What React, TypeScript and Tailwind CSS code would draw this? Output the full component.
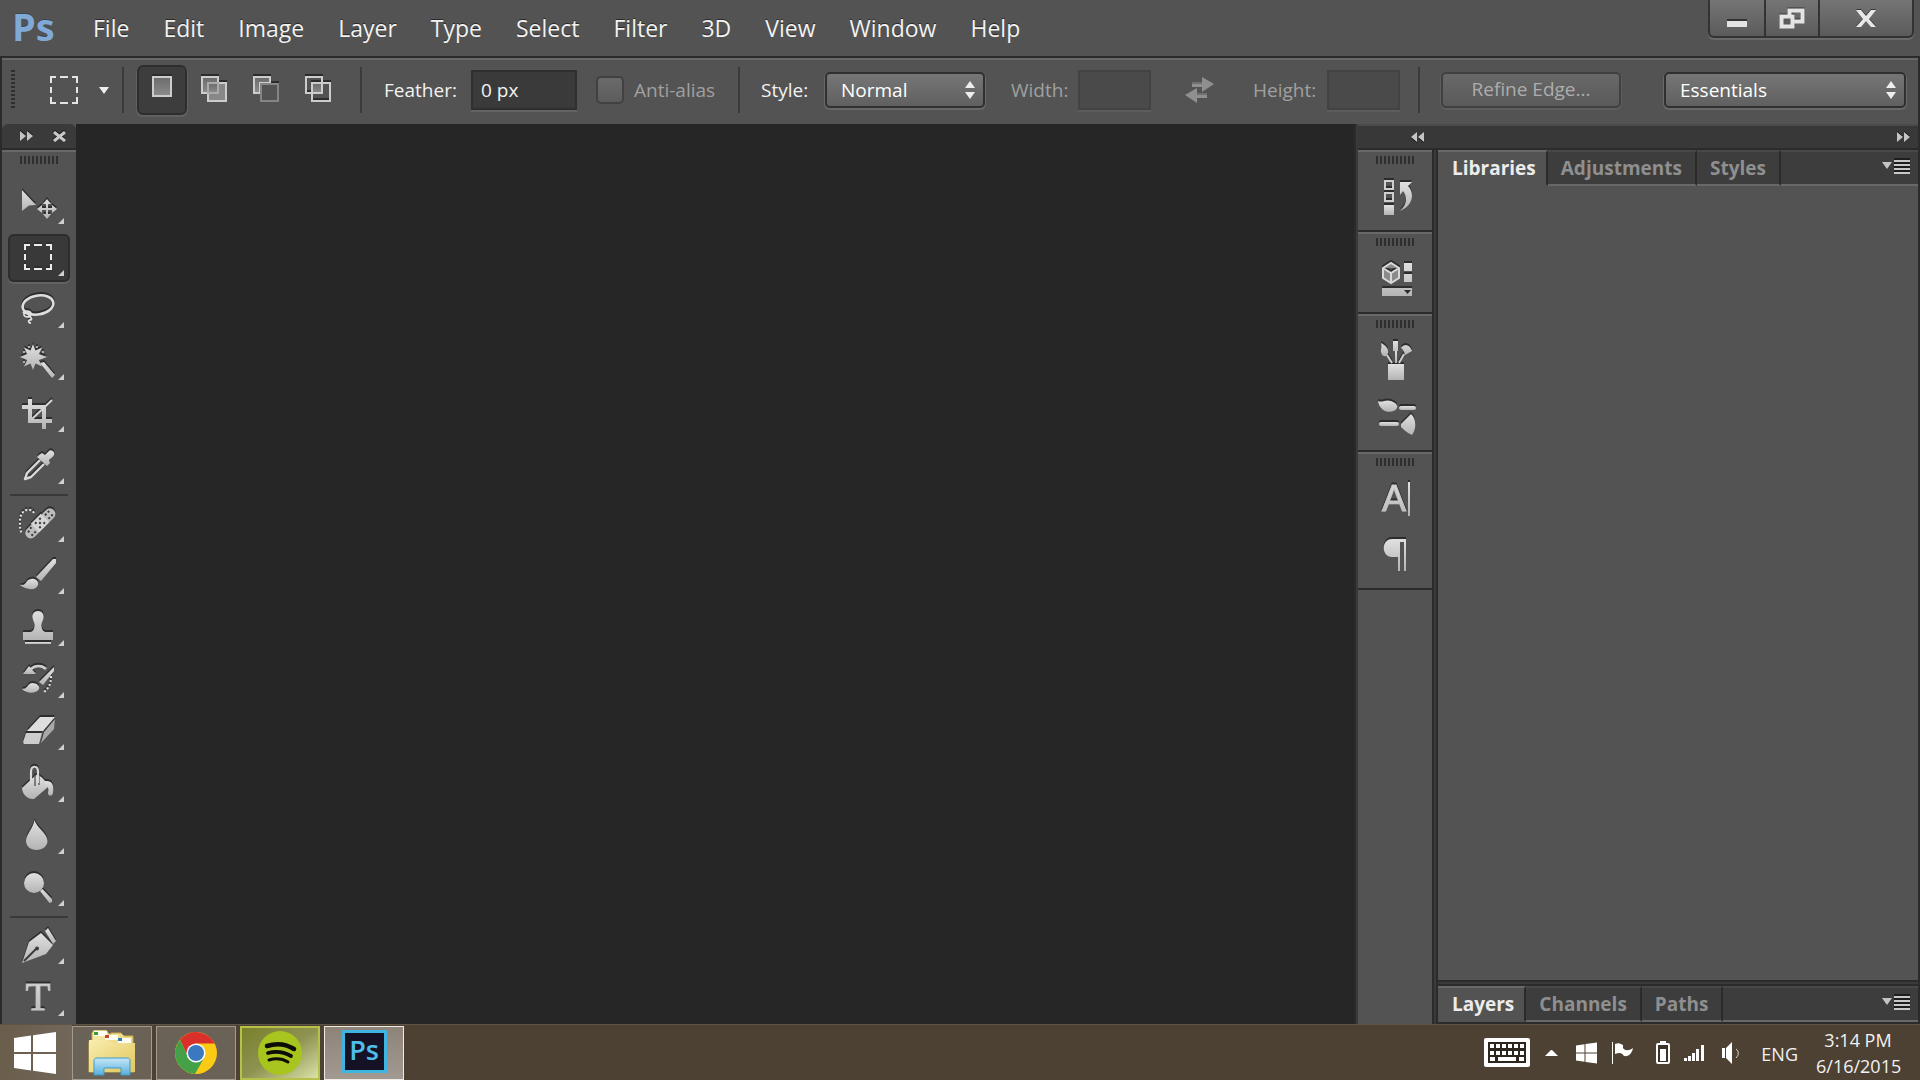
import type { ReactNode } from "react";

const menus = [
  "File",
  "Edit",
  "Image",
  "Layer",
  "Type",
  "Select",
  "Filter",
  "3D",
  "View",
  "Window",
  "Help",
];

interface Tool {
  name: string;
  icon: ReactNode;
  endsGroup?: boolean;
}

const SHADE = "url(#shade)";

const tools: Tool[] = [
  {
    name: "Move",
    icon: (
      <>
        <path d="M20 10 34 25 27 25.500 20 31Z" />
        <path d="M45 19l4 5h-3v4h4v-3l5 4-5 4v-3h-4v4h3l-4 5-4-5h3v-4h-4v3l-5-4 5-4v3h4v-4h-3z" />
      </>
    ),
  },
  {
    name: "Rectangular marquee",
    icon: (
      <path
        d="M23 18v-5h5M32 13h8M44 13h5v5M49 22v6M49 32v5h-5M40 37h-8M28 37h-5v-5M23 28v-6"
        fill="none"
        stroke="#ececec"
        strokeWidth="2"
      />
    ),
  },
  {
    name: "Lasso",
    icon: (
      <g fill="none" stroke="#dedede" strokeWidth="2.500">
        <ellipse cx="36" cy="21" rx="15.500" ry="9.500" transform="rotate(-10 36 21)" />
        <path
          d="M21 29c2-3 8-2 8 1s-6 4-7 1 4-2 6 1 2 4 0 4 -2 3 1 3"
          strokeWidth="1.800"
        />
      </g>
    ),
  },
  {
    name: "Magic wand",
    icon: (
      <>
        <path d="M31 8l2.500 6.500 6.500-3-3 6.500 8 3-8 3 3 6.500-6.500-3L31 34l-2.500-6.500-6.500 3 3-6.500-7-3 7-3-3-6.500 6.500 3z" />
        <path d="M38 27l4-1 11 13-3 3z" />
        <g fill="#cfcfcf">
          <circle cx="27" cy="11" r="1" />
          <circle cx="35" cy="11" r="1" />
          <circle cx="22" cy="16" r="1" />
          <circle cx="22" cy="26" r="1" />
          <circle cx="41" cy="16" r="1" />
        </g>
      </>
    ),
  },
  {
    name: "Crop",
    icon: (
      <>
        <path d="M26 11h4v6h14v14h6v4h-6v6h-4v-6H26V21h-6v-4h6zM30 21v10h10V21z" fillRule="evenodd" />
        <path d="M30 31 50 12" stroke="#d4d4d4" strokeWidth="2" />
      </>
    ),
  },
  {
    name: "Eyedropper",
    icon: (
      <>
        <path
          d="M38 20 25 33l-2 6 6-2 13-13"
          fill="none"
          stroke="#d8d8d8"
          strokeWidth="2.400"
          strokeLinejoin="round"
        />
        <path d="M37 15l3-2 3 2 4-4c2-2 7 1 4.500 5L47 20l1 3-3 3-10-9z" />
      </>
    ),
    endsGroup: true,
  },
  {
    name: "Spot healing brush",
    icon: (
      <>
        <path
          d="M32 15c-3-6-14-4-14 8v4c0 5 1 6 2 9"
          fill="none"
          stroke="#e4e4e4"
          strokeWidth="2"
          strokeDasharray="2 2"
        />
        <g transform="rotate(-45 38 25)">
          <rect x="19" y="20" width="38" height="11" rx="5.500" fill="#bdbdbd" />
          <rect x="31" y="19" width="14" height="12" fill="#d6d6d6" />
          <path
            d="M23 23h2M27 28h2M27 22h2M23 28h2M34 22h2M40 22h2M37 25h2M34 28h2M40 28h2M47 23h2M51 23h2M47 28h2M51 28h2"
            stroke="#3a3a3a"
            strokeWidth="2"
          />
        </g>
      </>
    ),
  },
  {
    name: "Brush",
    icon: (
      <>
        <path d="M54 9v4L39 31l-5-4L51 9z" />
        <path d="M18 35c7 1 5-5 11-6 5-1 8 3 7 6-2 6-12 5-18 0z" />
      </>
    ),
  },
  {
    name: "Clone stamp",
    icon: (
      <>
        <path d="M36 9c4 0 6 3 5.500 6.500-.5 4-2.500 5-2 9 .5 3 2 5.500 4 5.500H51v8H21v-8h7.500c2 0 3.500-2.500 4-5.500.5-4-1.500-5-2-9C30 12 32 9 36 9z" />
        <path d="M23 40h26v2H23z" />
      </>
    ),
  },
  {
    name: "History brush",
    icon: (
      <>
        <path d="M27 12l7 8H21z" />
        <path d="M29 15c4-4 11-4 15 0" fill="none" stroke="#d0d0d0" strokeWidth="2.500" />
        <path d="M52 13v4L41 31l-4-3z" />
        <path d="M20 35c6 0 5-5 10-6 5 0 8 3 7 6-3 5-12 5-17 0z" />
        <path
          d="M49 22c0 8-2 12-7 16"
          fill="none"
          stroke="#e0e0e0"
          strokeWidth="2"
          strokeDasharray="2 2"
        />
      </>
    ),
  },
  {
    name: "Eraser",
    icon: (
      <>
        <path d="M38 11h15L41 25H25z" fill="#dedede" />
        <path d="M24 27h16l-3 11H22c-1-1-1-3 0-5z" fill="#cdcdcd" />
        <path d="M42 26l11-13-1 10-13 14z" fill="#a8a8a8" />
      </>
    ),
  },
  {
    name: "Paint bucket",
    icon: (
      <>
        <path d="M20 30 34 17c5 0 10 6 12 12L32 41c-6 1-12-5-12-11z" />
        <path d="M43 23c8-1 9 5 8 12-1 4-5 3-5 0 1-5 0-7-4-8z" />
        <path d="M33 17v11M37 17v10" stroke="#444" strokeWidth="1.200" />
        <path
          d="M29 25V14c0-7 7-7 7 0v11"
          fill="none"
          stroke="#d8d8d8"
          strokeWidth="2.200"
        />
      </>
    ),
  },
  {
    name: "Blur",
    icon: <path d="M32.500 10c2 8 13 13 13 21 0 5-5 9-11 9s-10.500-4-10.500-9c0-7 7-12 8.500-21z" />,
  },
  {
    name: "Dodge",
    icon: (
      <>
        <circle cx="32" cy="21" r="10" />
        <path d="M38 29l2.500-2L50 37v3l-2.500 1z" />
      </>
    ),
    endsGroup: true,
  },
  {
    name: "Pen",
    icon: (
      <>
        <path d="M20 43l7-21 12-9 12 12-7 9z" />
        <path d="M43 11l3-3L54 21l-3 3z" />
        <path d="M22 41l12-12" stroke="#3c3c3c" strokeWidth="2" />
        <circle cx="35" cy="28.500" r="2" fill="#3c3c3c" />
      </>
    ),
  },
  {
    name: "Type",
    icon: (
      <text
        x="36"
        y="38"
        textAnchor="middle"
        fontFamily="Liberation Serif, serif"
        fontSize="41"
        stroke="#c8c8c8"
      >
        T
      </text>
    ),
  },
];

function ShadeDefs() {
  return (
    <svg width="0" height="0" className="absolute" aria-hidden="true">
      <defs>
        <linearGradient id="shade" x1="0" y1="0" x2="0" y2="1">
          <stop offset="0" stopColor="#e0e0e0" />
          <stop offset="1" stopColor="#b4b4b4" />
        </linearGradient>
        <linearGradient id="well" x1="0" y1="0" x2="0" y2="1">
          <stop offset="0" stopColor="#6a6a6a" />
          <stop offset="1" stopColor="#8c8c8c" />
        </linearGradient>
        <linearGradient id="folder" x1="0" y1="0" x2="1" y2="1">
          <stop offset="0" stopColor="#f8eeb0" />
          <stop offset="1" stopColor="#e3c65c" />
        </linearGradient>
        <linearGradient id="stand" x1="0" y1="0" x2="0" y2="1">
          <stop offset="0" stopColor="#c5e7f7" />
          <stop offset="1" stopColor="#58b0dd" />
        </linearGradient>
      </defs>
    </svg>
  );
}

function Grip() {
  return (
    <div className="h-2 w-[38px] bg-[repeating-linear-gradient(90deg,#2f2f2f_0_2px,#535353_2px_4px)]" />
  );
}

function Divider() {
  return <div className="h-[46px] w-[2px] shrink-0 bg-[#3b3b3b]" />;
}

function MenuBar() {
  return (
    <header className="flex h-14 shrink-0 bg-[#535353]">
      <div className="w-[76px] pl-3 text-[38px] leading-[52px] font-bold text-[#80a9d6] [text-shadow:0_-1px_0_#3a4652]">
        Ps
      </div>
      <nav className="flex">
        {menus.map((menu) => (
          <button
            key={menu}
            className="px-[17px] text-[23px] leading-[54px] [text-shadow:0_-1px_0_#2a2a2a]"
          >
            {menu}
          </button>
        ))}
      </nav>
      <div className="mr-[6px] ml-auto flex h-[38px] divide-x-2 divide-[#333] rounded-b-md border-2 border-t-0 border-[#333] bg-linear-to-b from-[#757575] to-[#5b5b5b] shadow-[0_2px_0_#6a6a6a]">
        <button aria-label="Minimize" className="flex w-14 justify-center pt-5">
          <svg width="22" height="8" fill="#e4e4e4" className="drop-shadow-[0_-2px_0_#333]">
            <path d="M1 1h20v6H1z" />
          </svg>
        </button>
        <button aria-label="Restore" className="flex w-[54px] justify-center pt-2">
          <svg width="26" height="22" className="drop-shadow-[0_-1px_0_#333]">
            <path d="M10.500 2.500h13v11h-13z" fill="none" stroke="#e4e4e4" strokeWidth="4" />
            <path d="M2.500 8.500h11v10h-11z" fill="#5c5c5c" stroke="#e4e4e4" strokeWidth="4" />
          </svg>
        </button>
        <button aria-label="Close" className="flex w-[92px] justify-center pt-[9px]">
          <svg width="22" height="20" className="drop-shadow-[0_-1px_0_#333]">
            <path d="M1 1h5l5 6 5-6h5l-7 9 7 8h-5l-5-6-5 6H1l7-8z" fill="#e8e8e8" />
          </svg>
        </button>
      </div>
    </header>
  );
}

function SelectBox({ id, options, width }: { id: string; options: string[]; width: string }) {
  return (
    <div className={`relative ${width}`}>
      <select
        id={id}
        aria-label={id}
        className="h-9 w-full appearance-none rounded-[5px] border-2 border-[#303030] bg-linear-to-b from-[#767676] to-[#606060] px-[14px] text-[19px] leading-8 text-white shadow-[0_1px_0_1px_#686868]"
      >
        {options.map((option) => (
          <option key={option}>{option}</option>
        ))}
      </select>
      <svg
        width="12"
        height="18"
        fill="#eee"
        className="pointer-events-none absolute top-[9px] right-[9px]"
      >
        <path d="M6 0l5 7H1zM1 11h10l-5 7z" />
      </svg>
    </div>
  );
}

const selectionModes = [
  {
    name: "New selection",
    icon: <path d="M4 1h18v19H4z" fill="url(#well)" stroke="#ccc" strokeWidth="2" />,
  },
  {
    name: "Add to selection",
    icon: (
      <g strokeWidth="2" stroke="#ccc" fill="url(#well)">
        <path d="M1 1h16v16H1z" />
        <path d="M7 7h18v18H7z" fill="#888" />
        <path d="M7 7h10v10H7z" stroke="#aaa" />
      </g>
    ),
  },
  {
    name: "Subtract from selection",
    icon: (
      <g strokeWidth="2" fill="url(#well)">
        <path d="M1 1h16v6H7v10H1z" stroke="#ccc" />
        <path d="M8 8h17v17H8z" stroke="#858585" fill="#535353" />
      </g>
    ),
  },
  {
    name: "Intersect with selection",
    icon: (
      <g strokeWidth="2" stroke="#ccc" fill="none">
        <path d="M1 1h16v16H1z" />
        <path d="M7 7h18v18H7z" />
        <path d="M7 7h10v10H7z" fill="url(#well)" />
      </g>
    ),
  },
];

function OptionsBar() {
  return (
    <div className="flex h-[68px] shrink-0 items-center border-t-2 border-r-2 border-l-2 border-[#2b2b2b] bg-[#535353] pb-[2px] text-[19px] shadow-[inset_0_2px_0_#686868]">
      <div className="ml-[9px] h-10 w-1 shrink-0 bg-[repeating-linear-gradient(#2f2f2f_0_2px,#535353_2px_4px)]" />
      <button aria-label="Tool preset" className="ml-[35px] flex items-center gap-5">
        <svg width="28" height="28" fill="none" stroke="#e4e4e4" strokeWidth="2">
          <path d="M1 7V1h5M10 1h8M22 1h5v6M27 11v6M27 21v6h-5M18 27h-8M6 27H1v-6M1 17v-6" />
        </svg>
        <svg width="12" height="8" fill="#eee">
          <path d="M1 1h10L6 8z" />
        </svg>
      </button>
      <div className="ml-3">
        <Divider />
      </div>
      <div className="ml-[13px] flex gap-[2px]">
        {selectionModes.map((mode, index) => (
          <button
            key={mode.name}
            aria-label={mode.name}
            className={`flex h-[50px] w-[50px] justify-center rounded-md border-2 pt-[9px] ${
              index === 0
                ? "border-[#2e2e2e] bg-[#3d3d3d] shadow-[0_1px_0_1px_#616161]"
                : "border-transparent"
            }`}
          >
            <svg width="26" height="27" className="drop-shadow-[0_-2px_0_#2c2c2c]">
              {mode.icon}
            </svg>
          </button>
        ))}
      </div>
      <div className="ml-[17px]">
        <Divider />
      </div>
      <label htmlFor="feather" className="ml-[22px] w-[87px]">
        Feather:
      </label>
      <input
        id="feather"
        defaultValue="0 px"
        className="h-10 w-[106px] border-2 border-[#2f2f2f] bg-[#3a3a3a] pl-2 shadow-[0_2px_0_#636363] outline-none"
      />
      <label className="ml-[19px] flex w-[142px] items-center gap-[10px] text-[#a0a0a0]">
        <input
          type="checkbox"
          disabled
          className="h-7 w-7 appearance-none rounded-[5px] border-2 border-[#414141] bg-linear-to-b from-[#6a6a6a] to-[#5c5c5c]"
        />
        Anti-alias
      </label>
      <Divider />
      <label htmlFor="Style" className="ml-[21px] w-16">
        Style:
      </label>
      <SelectBox id="Style" options={["Normal", "Fixed Ratio", "Fixed Size"]} width="w-[160px]" />
      <label htmlFor="width" className="ml-[26px] w-[67px] text-[#a0a0a0]">
        Width:
      </label>
      <input
        id="width"
        disabled
        className="h-10 w-[73px] border-2 border-[#434343] bg-[#4a4a4a] shadow-[0_2px_0_#5c5c5c]"
      />
      <button aria-label="Swap width and height" className="ml-[34px]" disabled>
        <svg width="30" height="28" fill="#8f8f8f">
          <path d="M7 6h10V1l12 7-12 8v-5H7zM22 22H12v5L0 19l12-7v5h10z" />
          <path d="M7 6h10v2H7zM12 17h10v2H12z" fill="#707070" />
        </svg>
      </button>
      <label htmlFor="height" className="ml-[38px] w-[74px] text-[#a0a0a0]">
        Height:
      </label>
      <input
        id="height"
        disabled
        className="mr-[18px] h-10 w-[73px] border-2 border-[#434343] bg-[#4a4a4a] shadow-[0_2px_0_#5c5c5c]"
      />
      <Divider />
      <button
        disabled
        className="ml-[21px] h-9 w-[180px] rounded-[5px] border-2 border-[#404040] bg-linear-to-b from-[#686868] to-[#5a5a5a] pb-[2px] leading-[28px] text-[#adadad] shadow-[0_1px_0_1px_#5e5e5e]"
      >
        Refine Edge...
      </button>
      <div className="mr-3 ml-auto">
        <SelectBox
          id="Workspace"
          options={["Essentials", "Photography", "Painting"]}
          width="w-[242px]"
        />
      </div>
    </div>
  );
}

function Chevrons({ flip = false }: { flip?: boolean }) {
  return (
    <svg
      width="13"
      height="10"
      fill="#c4c4c4"
      className={`drop-shadow-[0_-1px_0_#111] ${flip ? "rotate-180" : ""}`}
    >
      <path d="M0 0l6 5-6 5zM7 0l6 5-6 5z" />
    </svg>
  );
}

function Toolbox() {
  return (
    <aside className="w-[76px] shrink-0 border-l-2 border-[#2b2b2b] bg-[#535353]">
      <div className="flex h-[26px] items-center justify-between rounded-t-md border-b-2 border-[#2b2b2b] bg-[#3a3a3a] pr-[10px] pl-[18px]">
        <button aria-label="Expand toolbox">
          <Chevrons />
        </button>
        <button aria-label="Close toolbox">
          <svg width="13" height="11" className="drop-shadow-[0_-1px_0_#111]">
            <path d="M1 1l11 9M12 1L1 10" stroke="#c8c8c8" strokeWidth="3" />
          </svg>
        </button>
      </div>
      <div className="h-[30px] border-t-2 border-[#686868] pt-1 pl-[18px]">
        <Grip />
      </div>
      {tools.map((tool) => (
        <div key={tool.name}>
          <div className="px-[6px] py-[2px]">
            <button
              aria-label={tool.name}
              className={`block h-12 w-[62px] rounded-md ${
                tool.name === "Rectangular marquee"
                  ? "bg-[#393939] shadow-[inset_0_0_0_2px_#2d2d2d,0_2px_0_#626262]"
                  : ""
              }`}
            >
              <svg width="62" height="48" viewBox="6 2 62 48">
                <g fill={SHADE} className="drop-shadow-[0_-2px_0_#2e2e2e]">
                  {tool.icon}
                </g>
                <path d="M62 38v6h-6z" fill="#d0d0d0" />
              </svg>
            </button>
          </div>
          {tool.endsGroup && <hr className="mx-2 my-[2px] border-t-2 border-[#393939]" />}
        </div>
      ))}
    </aside>
  );
}

const panelGroups: { name: string; icon: ReactNode }[][] = [
  [
    {
      name: "History",
      icon: (
        <>
          <path
            d="M10 6h8v8h-8zM10 18h8v8h-8z"
            fill="none"
            stroke="#cfcfcf"
            strokeWidth="2"
          />
          <path d="M9 30h10v10H9z" />
          <path d="M25 7h12l-4 4c7 7 5 20-8 25 8-7 7-15 3-20l-3 4z" />
        </>
      ),
    },
  ],
  [
    {
      name: "Properties",
      icon: (
        <>
          <path
            d="M8 11l8-5 8 5v10l-8 5-8-5zM8 11l8 5 8-5M16 16v10"
            fill="#8a8a8a"
            stroke="#d8d8d8"
            strokeWidth="2"
          />
          <path d="M29 6h8v8h-8zM29 17h8v8h-8zM7 31h30v8H7z" />
          <path d="M29 33h7l-3.500 4z" fill="#2c2c2c" />
        </>
      ),
    },
  ],
  [
    {
      name: "Brush",
      icon: (
        <>
          <path d="M13 25h16v16H13z" />
          <path d="M6 4c4 2 8 5 7 10-1 5-6 4-7-1-.5-3 1-5 0-9zM18 2h5v10h-5zM26 9c3-5 9-4 11 3l-7 4c-1-4-2-6-4-7z" />
          <path d="M12 16l5 8M29 15l-5 9" stroke="#cfcfcf" strokeWidth="2" />
          <path d="M20 12h2v12h-2z" />
        </>
      ),
    },
    {
      name: "Brush presets",
      icon: (
        <>
          <path d="M3 6c5 2 7-2 13 0 5 2 7 4 6 7-3 6-17 6-19-7z" />
          <rect x="24" y="11" width="17" height="4" rx="2" />
          <rect x="4" y="27" width="20" height="4" rx="2" />
          <path d="M26 29l10-10c5 4 6 14 1 21-5-2-9-6-11-8z" />
        </>
      ),
    },
  ],
  [
    {
      name: "Character",
      icon: (
        <>
          <text
            x="19"
            y="34"
            textAnchor="middle"
            fontFamily="Liberation Sans, sans-serif"
            fontSize="36"
            stroke="#c8c8c8"
          >
            A
          </text>
          <path d="M33 5h2v34h-2z" />
        </>
      ),
    },
    {
      name: "Paragraph",
      icon: <path d="M17 6h14v32h-2V9h-4v29h-2V24h-6C6 24 6 6 17 6z" />,
    },
  ],
];

function PanelDock() {
  return (
    <div className="w-[76px] shrink-0 border-r-2 border-[#2b2b2b] bg-[#535353]">
      {panelGroups.map((group) => (
        <div
          key={group[0].name}
          className="border-b-2 border-[#2b2b2b] shadow-[inset_0_2px_0_#686868]"
        >
          <div className="h-6 pt-[6px] pl-[18px]">
            <Grip />
          </div>
          {group.map((panel) => (
            <button
              key={panel.name}
              aria-label={panel.name}
              className="flex h-14 w-full justify-center pt-px pl-[3px]"
            >
              <svg
                width="44"
                height="44"
                viewBox="0 0 44 44"
                fill={SHADE}
                className="drop-shadow-[0_-2px_0_#2c2c2c]"
              >
                {panel.icon}
              </svg>
            </button>
          ))}
        </div>
      ))}
    </div>
  );
}

function TabBar({ tabs }: { tabs: string[] }) {
  return (
    <div className="flex h-9 bg-[#3d3d3d] text-[19px] leading-8 font-bold text-[#8f8f8f]">
      {tabs.map((tab, index) => (
        <button
          key={tab}
          className={
            index === 0
              ? "border-t-2 border-r-2 border-b-2 border-t-[#686868] border-r-[#2b2b2b] border-b-[#535353] bg-[#535353] pr-[10px] pl-[14px] text-[#ececec]"
              : "border-t-2 border-r-2 border-b-2 border-t-[#484848] border-r-[#2b2b2b] border-b-[#686868] px-[13px]"
          }
        >
          {tab}
        </button>
      ))}
      <div className="flex grow items-start justify-end border-t-2 border-b-2 border-t-[#484848] border-b-[#686868] pt-[5px] pr-2">
        <button aria-label="Panel menu">
          <svg width="28" height="20" className="block">
            <path d="M0 5h10L5 12z" fill="#c4c4c4" />
            <path d="M12 4h16M12 8h16M12 12h16M12 16h16" stroke="#c8c8c8" strokeWidth="2" />
            <path d="M12 2h16M12 6h16M12 10h16M12 14h16" stroke="#1e1e1e" strokeWidth="2" />
          </svg>
        </button>
      </div>
    </div>
  );
}

function RightDock() {
  return (
    <aside className="flex w-[566px] shrink-0 flex-col border-x-2 border-[#2b2b2b] bg-[#3a3a3a] pl-[2px]">
      <div className="flex h-[26px] shrink-0 items-center justify-between border-y-2 border-t-[#4a4a4a] border-b-[#2b2b2b] bg-[#383838] pr-2 pl-[53px]">
        <button aria-label="Expand panels">
          <Chevrons flip />
        </button>
        <button aria-label="Collapse panels">
          <Chevrons />
        </button>
      </div>
      <div className="flex grow">
        <PanelDock />
        <div className="ml-[2px] flex grow flex-col border-l-2 border-[#2b2b2b]">
          <TabBar tabs={["Libraries", "Adjustments", "Styles"]} />
          <div className="grow border-b-2 border-[#2b2b2b] bg-[#535353]" />
          <div className="mt-[2px] border-y-2 border-[#2b2b2b]">
            <TabBar tabs={["Layers", "Channels", "Paths"]} />
          </div>
        </div>
      </div>
    </aside>
  );
}

function WindowsLogo({ className }: { className: string }) {
  return (
    <svg viewBox="0 0 42 42" fill="#fff" className={className}>
      <path d="M0 6l17-2.500v16.500H0zM19 3.200 42 0v20H19zM0 22h17v16.500L0 36zM19 22h23v20l-23-3.200z" />
    </svg>
  );
}

function Taskbar() {
  return (
    <footer className="flex h-14 shrink-0 items-center border-t border-[#5f5445] bg-[#4c4133]">
      <button
        aria-label="Start"
        className="flex h-full w-[72px] items-center bg-linear-to-r from-[#6a5d4b] to-[#71675a] pl-[14px]"
      >
        <WindowsLogo className="h-[42px] w-[42px]" />
      </button>
      <div className="flex gap-1">
        <button
          aria-label="File Explorer"
          className="flex h-[54px] w-20 items-center justify-center border border-[#a39c91] bg-[#6b6257]"
        >
          <svg width="48" height="46">
            <path
              d="M4 12V3l2-3h12l3 4h2V3h10l3 3h9v7l1 2v27H1V12z"
              fill="url(#folder)"
              stroke="#c9a94b"
            />
            <path d="M6 1h13v5H6zM17 5h13v5H17zM30 8h13v5H30z" fill="#fdfdf4" />
            <path d="M6 2h4v3H6z" fill="#3f9b3a" />
            <path d="M17 5h4v3h-4z" fill="#c8442b" />
            <path d="M30 8h4v3h-4z" fill="#2c7fa5" />
            <path d="M1 10h18l5 3h23v29H1z" fill="url(#folder)" />
            <path
              d="M6 45V31c0-2 1-3 3-3h30c2 0 3 1 3 3v14h-9v-7H16v7z"
              fill="url(#stand)"
              stroke="#3d9bcb"
            />
          </svg>
        </button>
        <button
          aria-label="Google Chrome"
          className="flex h-[54px] w-20 items-center justify-center border border-[#a39c91] bg-[#6b6257]"
        >
          <svg width="42" height="42" viewBox="-21 -21 42 42">
            <circle r="21" fill="#fbca14" />
            <path d="M-16-13.500A21 21 0 0 1 18.700-9.500H0L-8 4z" fill="#d9302c" />
            <path d="M-16-13.500A21 21 0 0 0-1 21L8 5-8 4z" fill="#44a147" />
            <circle r="9.500" fill="#fff" />
            <circle r="8" fill="#3b78c0" />
          </svg>
        </button>
        <button
          aria-label="Spotify"
          className="flex h-[54px] w-20 items-center justify-center border-2 border-[#b6c14a] bg-linear-to-br from-[#78802a] via-[#8e9250] to-[#dbe2a8]"
        >
          <svg width="44" height="44" viewBox="0 0 44 44">
            <circle cx="22" cy="22" r="22" fill="#a8c41f" />
            <g fill="none" stroke="#0d0d05" strokeLinecap="round">
              <path d="M9 15c9-3 19-2 27 3" strokeWidth="4.500" />
              <path d="M10 22c8-2 16-1 23 3" strokeWidth="3.800" />
              <path d="M11 29c7-2 14-1 19 2" strokeWidth="3" />
            </g>
          </svg>
        </button>
        <button
          aria-label="Adobe Photoshop"
          className="flex h-[54px] w-20 items-start justify-center border border-[#efece6] bg-linear-to-b from-[#8d8379] to-[#a29a92] pt-[3px]"
        >
          <span className="h-[43px] w-[45px] border-[3px] border-[#3fb4e0] bg-[#151226] text-[27px] leading-[34px] font-semibold text-[#4fbdea]">
            Ps
          </span>
        </button>
      </div>
      <div className="ml-auto flex items-center pr-5 text-[18px]">
        <svg width="46" height="29" className="mr-[15px]">
          <rect width="46" height="29" rx="2" fill="#fff" />
          <path d="M4 4h38v21H4z" fill="#2c261e" />
          <path
            d="M6 8h34M6 15h34"
            stroke="#fff"
            strokeWidth="4"
            strokeDasharray="4 2"
          />
          <path d="M6 21h5M14 21h18M35 21h5" stroke="#fff" strokeWidth="4" />
        </svg>
        <svg width="13" height="8" fill="#fff" className="mr-[18px]">
          <path d="M0 7l6-6h1l6 6z" />
        </svg>
        <WindowsLogo className="mr-[14px] h-[22px] w-[21px]" />
        <svg width="23" height="24" fill="#fff" className="mr-[22px]">
          <path d="M1 1h1v22H1zM4 3c4-2 6 0 8 1v3c2 3 6 3 10 0-1 5-4 9-9 8-2-3-4-4-9-2z" />
        </svg>
        <svg width="14" height="24" className="mr-[14px]">
          <path d="M4 0h6v3H4z" fill="#fff" />
          <rect x="1" y="3" width="12" height="19" rx="1" fill="#3b332a" stroke="#fff" strokeWidth="2" />
          <path d="M4 8h6v12H4z" fill="#fff" />
        </svg>
        <svg width="21" height="18" fill="#fff" className="mr-4">
          <path d="M0 14h3v3H0zM4 12h3v5H4zM8 9h3v8H8zM12 5h3v12h-3zM17 1h3v16h-3z" />
        </svg>
        <svg width="22" height="24" fill="#fff" className="mr-[18px]">
          <path d="M1 7h3v10H1zM5 7l6-6v22l-6-6z" />
          <path d="M15 8c3 2 3 6 0 9" fill="none" stroke="#d8d4cc" />
        </svg>
        <span className="mr-[18px] pt-1">ENG</span>
        <div className="w-[84px] text-center leading-[26px] whitespace-nowrap">
          <div>3:14 PM</div>
          <div>6/16/2015</div>
        </div>
      </div>
    </footer>
  );
}

export default function App() {
  return (
    <div className="flex min-h-screen flex-col bg-[#262626] font-['Open_Sans',sans-serif] text-[#f2f2f2]">
      <ShadeDefs />
      <MenuBar />
      <OptionsBar />
      <div className="flex grow">
        <Toolbox />
        <main className="grow bg-[#262626]" />
        <RightDock />
      </div>
      <Taskbar />
    </div>
  );
}
